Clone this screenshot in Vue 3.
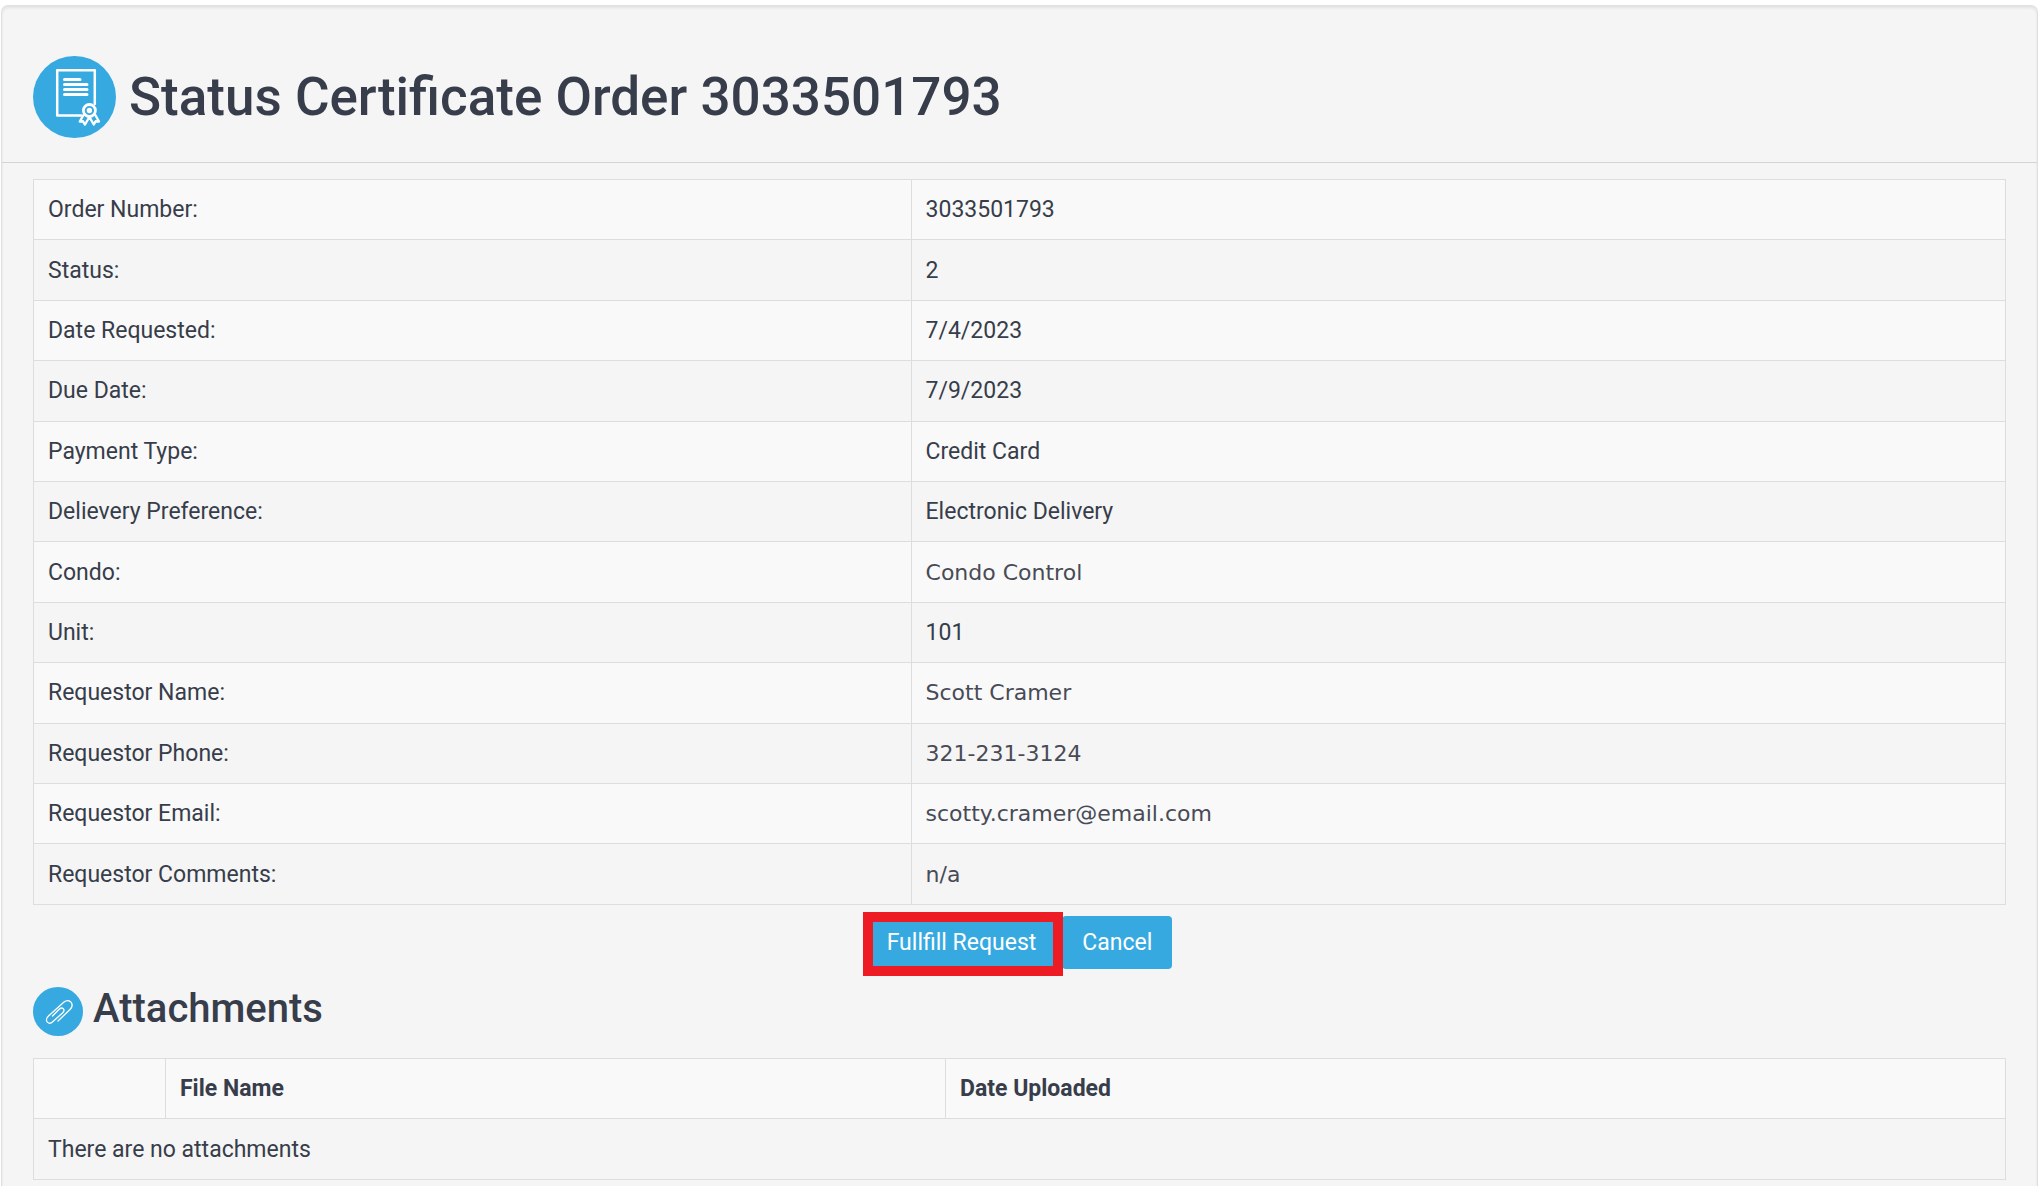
<script setup>
const details = [
  { label: 'Order Number:', value: '3033501793' },
  { label: 'Status:', value: '2' },
  { label: 'Date Requested:', value: '7/4/2023' },
  { label: 'Due Date:', value: '7/9/2023' },
  { label: 'Payment Type:', value: 'Credit Card' },
  { label: 'Delievery Preference:', value: 'Electronic Delivery' },
  { label: 'Condo:', value: 'Condo Control', wide: true },
  { label: 'Unit:', value: '101' },
  { label: 'Requestor Name:', value: 'Scott Cramer', wide: true },
  { label: 'Requestor Phone:', value: '321-231-3124', wide: true },
  { label: 'Requestor Email:', value: 'scotty.cramer@email.com', wide: true },
  { label: 'Requestor Comments:', value: 'n/a', wide: true },
]
</script>

<template>
  <main class="panel">
    <header class="panel-header">
      <svg class="icon-large" viewBox="0 0 83 82" aria-hidden="true">
        <ellipse cx="41.5" cy="41" rx="41.5" ry="41" fill="#36a9e1" />
        <g fill="none" stroke="#fff" stroke-linecap="round" stroke-linejoin="round">
          <path d="M48 59.5H24.200V14.200h37.600V48" stroke-width="2.500" />
          <path d="M31.500 23.500H47M31.500 28.500H54M31.500 33.500H54M31.500 38.500H54" stroke-width="3" />
          <path d="M50.500 59 46.800 65.500 50 65.300 52 68.500 56.400 61 60.800 68.500 62.600 65.300 66 65.500 62.300 59" stroke-width="2.400" fill="#36a9e1" />
          <circle cx="56.400" cy="54.500" r="6" stroke-width="2.800" fill="#36a9e1" />
        </g>
        <circle cx="56.400" cy="54.500" r="2.700" fill="#fff" />
      </svg>
      <h1>Status Certificate Order 3033501793</h1>
    </header>

    <div class="panel-body">
      <table class="grid details">
        <tbody>
          <tr v-for="row in details" :key="row.label">
            <th scope="row">{{ row.label }}</th>
            <td :class="{ wide: row.wide }">{{ row.value }}</td>
          </tr>
        </tbody>
      </table>

      <div class="actions">
        <button type="button" class="btn highlighted">Fullfill Request</button>
        <button type="button" class="btn">Cancel</button>
      </div>

      <section>
        <div class="section-title">
          <svg class="icon-small" viewBox="0 0 50 49" aria-hidden="true">
            <ellipse cx="25" cy="24.500" rx="25" ry="24.500" fill="#36a9e1" />
            <path
              d="M25 34 37 22.500C42 17.500 36.500 10.500 31 15L15.500 29C10.500 34 16 38.500 20 34.500L30 25.500C32.500 22.500 29.500 19.500 26.500 22L19.500 29"
              fill="none" stroke="#fff" stroke-width="1.300" stroke-linecap="round" stroke-linejoin="round"
            />
          </svg>
          <h2>Attachments</h2>
        </div>
        <table class="grid attachments">
          <colgroup>
            <col class="col-action" />
            <col class="col-name" />
            <col />
          </colgroup>
          <thead>
            <tr>
              <td></td>
              <th scope="col">File Name</th>
              <th scope="col">Date Uploaded</th>
            </tr>
          </thead>
          <tbody>
            <tr>
              <td colspan="3">There are no attachments</td>
            </tr>
          </tbody>
        </table>
      </section>
    </div>
  </main>
</template>

<style>
body {
  background: #fff;
}
</style>

<style scoped>
.panel {
  box-sizing: border-box;
  margin: 5px 0 0 1px;
  border: 1px solid #e0e0e0;
  border-bottom: 0;
  border-radius: 7px 7px 0 0;
  background: #f5f5f5;
  box-shadow: inset 0 2px 3px rgba(0, 0, 0, 0.08);
  color: #373d4a;
  font-family: Roboto, sans-serif;
  font-size: 23px;
  line-height: 32px;
}

.panel-header {
  display: flex;
  align-items: center;
  gap: 13px;
  padding: 50px 31px 24px;
  border-bottom: 1px solid #d3d4d5;
}

.icon-large {
  width: 83px;
  height: 82px;
}

h1,
h2 {
  margin: 0;
  font-weight: 500;
}

h1 {
  font-size: 53px;
  line-height: 58px;
}

h2 {
  font-size: 40px;
  line-height: 44px;
}

.panel-body {
  padding: 16px 31px 7px;
}

.grid {
  width: 100%;
  border-collapse: collapse;
  table-layout: fixed;
}

.grid th,
.grid td {
  padding: 1px 14px 0;
  border: 1px solid #dcdddd;
  text-align: left;
}

.grid tr {
  height: 60px;
}

.details {
  height: 726px;
}

.details th {
  width: 44.5%;
  box-sizing: border-box;
  font-weight: 400;
}

.details tr:nth-child(odd),
.attachments thead tr {
  background: #f9f9f9;
}

.details .wide {
  color: #484b56;
  font-family: "DejaVu Sans", Verdana, sans-serif;
  font-size: 22px;
}

.actions {
  display: flex;
  justify-content: center;
  gap: 6px;
  padding-top: 11px;
}

.btn {
  position: relative;
  padding: 11px 20px 10px;
  border: 0;
  border-radius: 4px;
  background: #36a9e1;
  color: #fff;
  font: inherit;
}

.highlighted::after {
  content: "";
  position: absolute;
  inset: -4px -7px -7px -4px;
  border: 10px solid #ed1c24;
}

.highlighted {
  z-index: 1;
}

.section-title {
  display: flex;
  align-items: flex-start;
  gap: 10px;
  margin: 18px 0 22px;
}

.icon-small {
  width: 50px;
  height: 49px;
}

.attachments {
  height: 122px;
}

.col-action {
  width: 132px;
}

.col-name {
  width: 780px;
}

.attachments th {
  font-weight: 700;
}
</style>
